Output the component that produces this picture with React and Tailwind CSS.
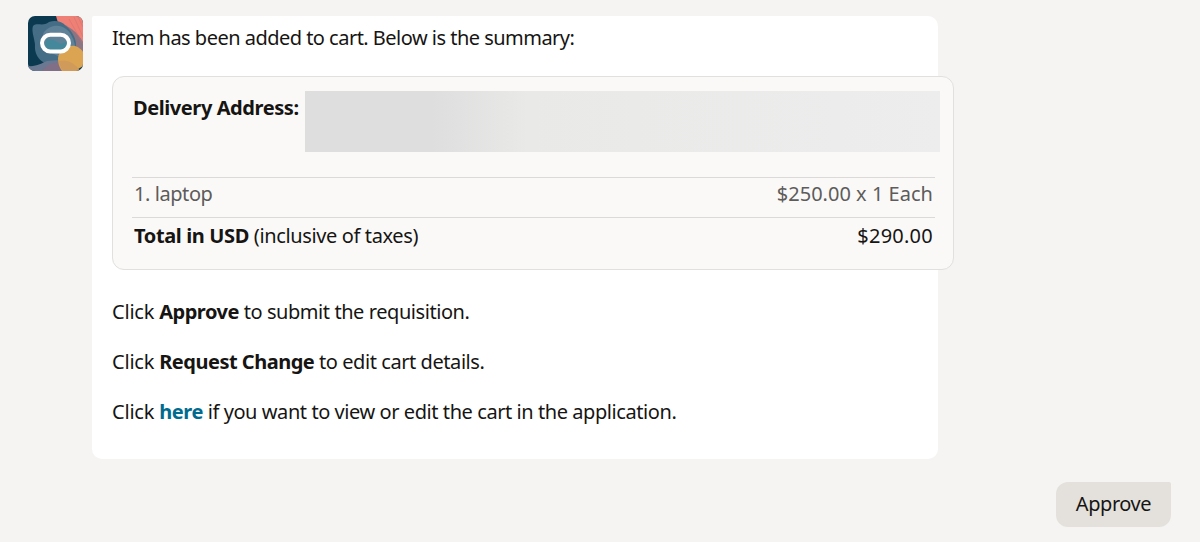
import React from 'react';

const STEPS = [
  { action: 'Approve', rest: 'to submit the requisition.' },
  { action: 'Request Change', rest: 'to edit cart details.' },
  { action: 'here', rest: 'if you want to view or edit the cart in the application.', link: true },
];

function BotAvatar() {
  return (
    <svg viewBox="0 0 55 55" className="w-[55px] h-[55px] shrink-0 rounded-[7px]">
      <rect width="55" height="55" fill="#0b3a50" />
      <path d="M28 0h27v36H42L31 10z" fill="#ee8077" />
      <path d="M29 8c9-1 20 7 26 18v14H38z" fill="#8d7583" />
      <path d="M5 10c4-4 10 1 16-4 6-2 13-1 17 4 7 6 11 14 10 22-1 12-11 19-21 18-12-1-21-9-20-21 0-5-4-14-2-19z" fill="#456d86" />
      <path d="M16 16c5-6 14-9 22-3 5 4 8 10 9 17L32 41 17 34c-3-6-4-12-1-18z" fill="#6b8ba0" opacity=".7" />
      <path d="M18 23l8 1 7 4 7-3-2 8-13 2-8-4z" fill="#46889b" />
      <path d="M0 50c8 1 14-3 19-5l12-1 5 11H0z" fill="#6a7891" />
      <path d="M14 55c5-6 10-9 18-8l7 8z" fill="#806f86" />
      <path d="M30 42c1-8 9-13 17-12 4 1 7 4 8 6v14l-8 5H34c-3-4-4-8-4-13z" fill="#dba453" />
      <path d="M31 45c8-2 16 2 21 10H35c-2-3-4-6-4-10z" fill="#d09b5a" />
      <path d="M46 1l9 20M50 1l5 10M41 3l14 25" stroke="#c96f70" strokeWidth=".7" opacity=".6" />
      <rect x="14" y="18.8" width="27" height="16.6" rx="8.3" fill="none" stroke="#fff" strokeWidth="4" />
    </svg>
  );
}

function SummaryCard() {
  return (
    <div className="w-[842px] h-[194px] mt-[24px] pt-[14px] pl-[19px] rounded-xl border border-[#e1e0df] bg-[#faf9f8]">
      <div className="flex w-[809px] h-[86px]">
        <span className="w-[173px] pl-px pt-[3px] font-bold tracking-[-0.42px]">Delivery Address:</span>
        {/* address is redacted */}
        <div className="w-[635px] h-[61px] bg-linear-to-r from-[#dfdede] from-20% via-[#e9e9e8] via-35% to-[#eeeded]" />
      </div>
      <div className="w-[803px] h-10 px-0.5 pt-[2px] flex justify-between border-t border-[#dbdad8] text-[#5d5c5a]">
        <span className="tracking-[-0.43px]">1. laptop</span>
        <span className="tracking-[0.02px]">$250.00 x 1 Each</span>
      </div>
      <div className="w-[803px] px-0.5 pt-1 flex justify-between border-t border-[#dbdad8]">
        <span className="tracking-[-0.37px]"><b>Total in USD</b> (inclusive of taxes)</span>
        <span className="tracking-[0.25px]">$290.00</span>
      </div>
    </div>
  );
}

export default function App() {
  return (
    <div className="w-[1200px] h-[542px] pt-4 pl-7 overflow-hidden bg-[#f5f4f2] font-['Noto_Sans',sans-serif] text-[20px] leading-[28px] tracking-[-0.43px] text-[#161513]">
      <div className="flex gap-[9px]">
        <BotAvatar />
        <div className="w-[846px] h-[443px] pl-5 pt-2 rounded-[10px] rounded-tl-[2px] bg-white">
          <p className="tracking-[-0.52px]">Item has been added to cart. Below is the summary:</p>
          <SummaryCard />
          <div className="mt-7 flex flex-col gap-[22px]">
            {STEPS.map(({ action, rest, link }) => (
              <p key={action}>
                <span className="tracking-[-0.2px]">Click </span>
                {link ? <a href="#" className="font-bold text-[#006b8f]">{action}</a> : <b className="tracking-[-0.5px]">{action}</b>} {rest}
              </p>
            ))}
          </div>
        </div>
      </div>
      <div className="mt-[23px] mr-[29px] flex justify-end">
        <button className="w-[115px] h-[45px] pb-px rounded-xl rounded-tr-[2px] bg-[#e4e1dd]">Approve</button>
      </div>
    </div>
  );
}
